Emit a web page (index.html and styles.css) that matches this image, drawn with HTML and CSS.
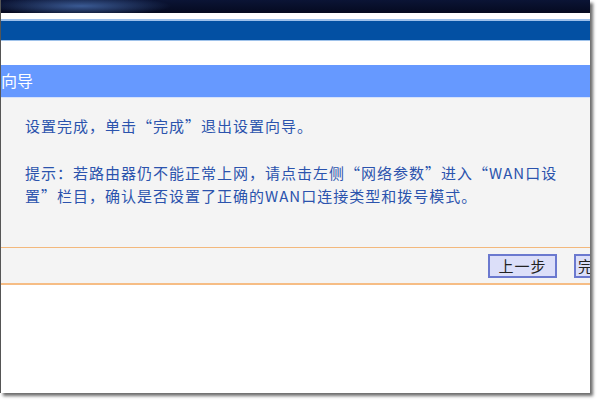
FILE: index.html
```html
<!DOCTYPE html>
<html lang="zh-CN">
<head>
<meta charset="utf-8">
<title>设置向导</title>
<link rel="stylesheet" href="styles.css">
</head>
<body>
<div class="window">
  <div class="page">
    <div class="topbar"></div>
    <div class="gap-white"></div>
    <div class="navbar"></div>
    <div class="spacer"></div>
    <div class="title">向导</div>
    <div class="content">
      <p class="msg">设置完成，单击“完成”退出设置向导。</p>
      <p class="msg tip">提示：若路由器仍不能正常上网，请点击左侧“网络参数”进入“WAN口设<br>置”栏目，确认是否设置了正确的WAN口连接类型和拨号模式。</p>
    </div>
    <div class="actions">
      <button class="btn">上一步</button>
      <button class="btn btn-cut">完成</button>
    </div>
    <div class="blank"></div>
  </div>
</div>
</body>
</html>
```
FILE: styles.css
```css
html, body {
  margin: 0;
  padding: 0;
  background: #ffffff;
}
body {
  width: 600px;
  height: 404px;
  overflow: hidden;
  font-family: "Noto Sans CJK SC", "Noto Sans", sans-serif;
}
.window {
  width: 589px;
  height: 393px;
  border-left: 1px solid #555;
  overflow: hidden;
  box-shadow: 3px 3px 3px rgba(60, 60, 60, 0.75);
  background: #fff;
}
.page {
  width: 660px;
  display: flex;
  flex-direction: column;
}
.topbar {
  height: 13px;
  background: radial-gradient(ellipse 90px 10px at 80px 6px, #3a5a94 0%, rgba(20,35,80,0) 100%), linear-gradient(#0b1435, #050a20);
}
.gap-white {
  height: 6px;
  background: #fff;
  border-bottom: 2px solid #9ec0ea;
}
.navbar {
  height: 19px;
  background: #0350a3;
  border-bottom: 1px solid #9fc2ea;
}
.spacer {
  height: 24px;
  background: #fff;
}
.title {
  height: 32px;
  line-height: 31px;
  background: #6699ff;
  color: #fff;
  font-size: 16px;
  padding-left: 0;
  white-space: nowrap;
  border-bottom: 1px solid #d6e2fb;
}
.content {
  height: 149px;
  background: #f4f4f4;
  padding: 16px 0 0 24px;
  box-sizing: border-box;
}
.msg {
  margin: 0;
  color: #2b53ad;
  font-size: 15px;
  line-height: 23px;
  letter-spacing: 1px;
  white-space: nowrap;
}
.tip {
  margin-top: 24px;
}
.actions {
  height: 35px;
  background: #f4f4f4;
  border-top: 1px solid #f3b87c;
  border-bottom: 2px solid #f6bd85;
  display: flex;
  align-items: center;
  gap: 17px;
  padding-left: 487px;
}
.btn {
  width: 69px;
  height: 24px;
  padding: 0;
  background: #dcdff9;
  border: 2px solid #6b79cf;
  color: #222;
  font-family: "Noto Sans CJK SC", sans-serif;
  font-size: 15px;
  line-height: 18px;
  letter-spacing: 1px;
}
.btn-cut {
  text-align: left;
  padding-left: 2px;
}
.blank {
  height: 108px;
  background: #fff;
}
```
